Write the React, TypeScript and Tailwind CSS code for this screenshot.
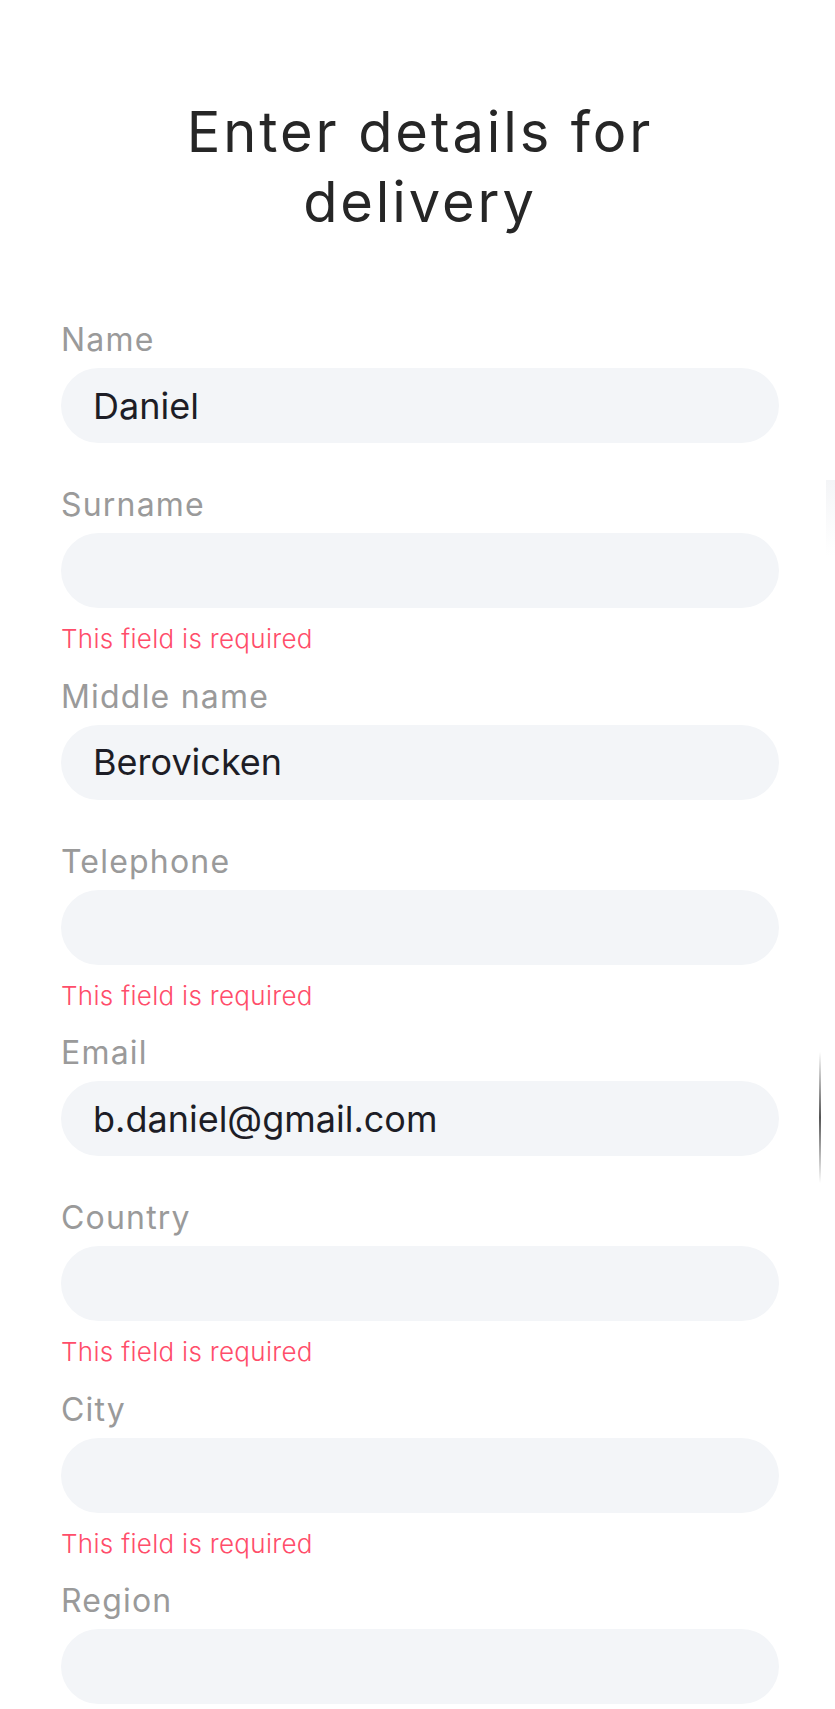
type Field = {
  label: string;
  value?: string;
  error?: boolean;
};

const fields: Field[] = [
  { label: "Name", value: "Daniel" },
  { label: "Surname", error: true },
  { label: "Middle name", value: "Berovicken" },
  { label: "Telephone", error: true },
  { label: "Email", value: "b.daniel@gmail.com" },
  { label: "Country", error: true },
  { label: "City", error: true },
  { label: "Region" },
];

export default function App() {
  return (
    <div className="relative min-h-[1709px] w-[835px] overflow-hidden bg-white font-['Inter',sans-serif]">
      <div className="ml-[61px] w-[718px] pt-[97px]">
        <h1 className="text-center text-[56px] font-normal leading-[70px] tracking-[2.9px] text-[#262626]">
          Enter details for
          <br />
          delivery
        </h1>
        <form className="mt-[83px] flex flex-col">
          {fields.map((f) => (
            <FormField key={f.label} field={f} />
          ))}
        </form>
      </div>
      {/* scroll indicator remnants on the right edge */}
      <div className="absolute left-[819px] top-[1052px] h-[131px] w-[2px] bg-gradient-to-b from-transparent via-[#555] to-transparent" />
      <div className="absolute left-[826px] top-[480px] h-[76px] w-[9px] bg-gradient-to-b from-[#f4f5f7] to-white" />
    </div>
  );
}

function FormField({ field }: { field: Field }) {
  return (
    <div className={field.error ? "mb-[21.5px] flex flex-col" : "mb-[42px] flex flex-col"}>
      <label className="text-[32px] leading-10 tracking-[1.2px] text-[#9a9a9a]">{field.label}</label>
      <div className="mt-2 flex h-[75px] items-center rounded-full bg-[#f3f5f8] px-8">
        <span className="text-[36px] leading-none text-[#1d1d26]">{field.value}</span>
      </div>
      {field.error && (
        <p className="mt-[15px] text-[26px] font-light leading-8 tracking-[0.3px] text-[#ff4d6a]">
          This field is required
        </p>
      )}
    </div>
  );
}
